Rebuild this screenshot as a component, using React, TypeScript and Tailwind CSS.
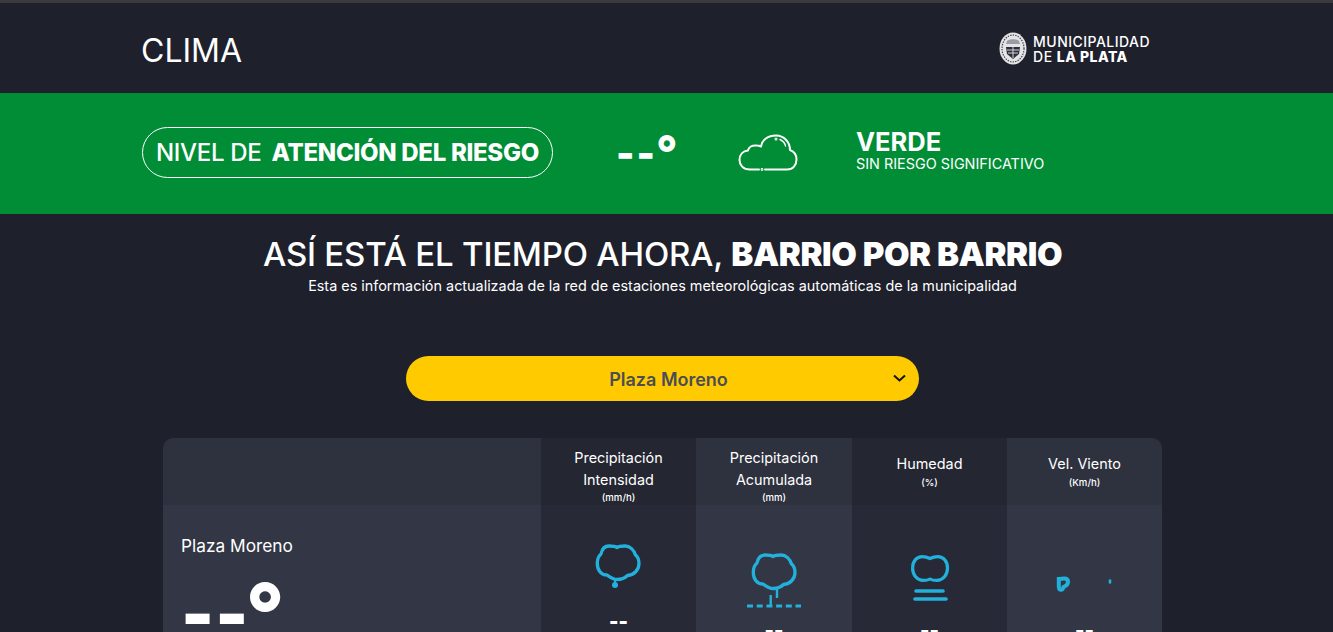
import React from "react";

const CLOUD = "M14 2 C17 2 20 2 22.3 3.5 C24 2 27 2 30 2 C35 2 39 6 40.5 11 C43 13 44 16 44 19.5 C44 26 39 31 32.5 31.5 C30 34 26 35.5 22 35.5 C18 35.5 15 33 12 31 C6 31 2.3 26 2.3 19.5 C2.3 16 3.5 12 6 10 C7 5 10 2 14 2 Z";

function Head({ title, sub, unit, bg }: { title: string; sub?: string; unit: string; bg: string }) {
  return (
    <div className={`${bg} flex flex-col items-center text-center text-white ${sub ? "pt-[9px]" : "pt-[15px]"}`}>
      <div className="text-[14.4px] leading-[22px]">{title}</div>
      {sub && <div className="text-[14.4px] leading-[22px]">{sub}</div>}
      <div className={`text-[9.6px] leading-[14px] font-medium ${sub ? "" : "mt-[1px]"}`}>{unit}</div>
    </div>
  );
}

function Cell({ bg, children, pad, gap }: { bg: string; children: React.ReactNode; pad: string; gap: string }) {
  return (
    <div className={`${bg} flex flex-col items-center ${pad}`}>
      {children}
      <div className={`shrink-0 text-white text-[20px] leading-[20px] font-black ${gap}`}>--</div>
    </div>
  );
}

export default function App() {
  return (
    <div className="h-[632px] w-[1333px] overflow-hidden bg-[#1e202c] font-['Inter',sans-serif]">
      <div className="h-[3px] bg-[#3a3a3a]" />
      <header className="h-[90px] w-[1325px] flex items-center justify-between pl-[141px] pr-[175px]">
        <h1 className="text-[32px] leading-none text-white font-normal mt-[6px]">CLIMA</h1>
        <div className="flex items-center gap-[6px] mt-[1px]">
          <svg width="28" height="33" viewBox="0 0 28 33">
            <ellipse cx="14" cy="16.5" rx="13.5" ry="16" fill="#e4e4e6" />
            <ellipse cx="14" cy="16.5" rx="11" ry="13.5" fill="none" stroke="#3c3f4b" strokeWidth="1.2" strokeDasharray="1.4 1.2" />
            <path d="M8 9 C10 6.5 18 6.5 20 9 L21 12 H7 Z" fill="#9a9ca4" />
            <path d="M7 15 H21 L20 22 L14 27 L8 22 Z" fill="#2c2f3b" />
            <path d="M8 18 H20 M9 21 H19 M14 15 V26" stroke="#e4e4e6" strokeWidth="0.9" />
          </svg>
          <div className="text-white text-[14px] leading-[14.5px] tracking-[0.47px] font-medium mt-[2px]">
            <div>MUNICIPALIDAD</div>
            <div>DE <b className="font-extrabold">LA PLATA</b></div>
          </div>
        </div>
      </header>

      <section className="h-[121px] w-full bg-[#018d36] flex items-center pl-[142px]">
        <div className="w-[411px] h-[51px] mt-[-2px] rounded-full border border-white flex items-center pl-[13px] text-white text-[24px] leading-none whitespace-nowrap">
          <span className="font-medium tracking-[-0.3px]">NIVEL DE</span>
          <b className="ml-[10px] font-extrabold tracking-[-0.3px]">ATENCIÓN DEL RIESGO</b>
        </div>
        <div className="ml-[63px] w-[59px] mt-[-22px] text-white text-[28px] leading-[28px] font-black whitespace-nowrap">
          <span className="inline-block translate-y-[11px] text-[39px] tracking-[2px]">--</span><span className="inline-block ml-[-1px] translate-y-[13px] text-[47px] font-extrabold">°</span>
        </div>
        <svg className="ml-[63px] mt-[-2px]" width="60" height="38" viewBox="0 0 60 38" fill="none" stroke="white" strokeWidth="2" strokeLinecap="round" strokeLinejoin="round">
          <path d="M21 35.5 H12 C5 35.5 1.5 31 1.5 26 C1.5 20.5 5 17 10 16.5 C10.5 13 14 11 19 11.5 C21 11.5 22 12 23 12.5 C24 6 30 1.5 38 1.5 C46 1.5 52 8 52 16 C56 17.5 58.5 21 58.5 25.5 C58.5 31 55 35.5 49 35.5 H27" />
          <path d="M42 5.5 C45 7 47 9 47.5 12" strokeWidth="1.4" />
          <circle cx="38" cy="5" r="0.5" fill="white" />
          <circle cx="24" cy="35.5" r="0.4" fill="white" />
        </svg>
        <div className="ml-[58px] text-white mt-[-8px]">
          <div className="text-[25.5px] leading-[27px] font-bold">VERDE</div>
          <div className="text-[14.4px] leading-[16px] mt-[1px]">SIN RIESGO SIGNIFICATIVO</div>
        </div>
      </section>

      <main className="w-[1325px] flex flex-col items-center">
        <h2 className="mt-[18px] text-[33px] leading-[44px] text-white font-medium whitespace-nowrap tracking-[-0.22px]">
          ASÍ ESTÁ EL TIEMPO AHORA, <b className="font-black tracking-[-0.4px]">BARRIO POR BARRIO</b>
        </h2>
        <p className="text-[14.4px] leading-[20px] text-white">
          Esta es información actualizada de la red de estaciones meteorológicas automáticas de la municipalidad
        </p>

        <div className="mt-[60px] w-[513px] h-[45px] rounded-full bg-[#ffcb00] flex items-center pl-[38px] pr-[13px] text-[#4a4d55] text-[18px] font-semibold">
          <span className="flex-1 text-center mt-[1px]">Plaza Moreno</span>
          <svg width="13" height="9" viewBox="0 0 13 9" fill="none" stroke="#111" strokeWidth="2">
            <path d="M1 1.5 L6.5 6.5 L12 1.5" />
          </svg>
        </div>

        <div className="mt-[37px] w-[999px] rounded-t-[10px] overflow-hidden grid grid-cols-[378px_155px_156px_155px_155px] grid-rows-[67px_127px]">
          <div className="bg-[#2e313e]" />
          <Head bg="bg-[#242632]" title="Precipitación" sub="Intensidad" unit="(mm/h)" />
          <Head bg="bg-[#2e313e]" title="Precipitación" sub="Acumulada" unit="(mm)" />
          <Head bg="bg-[#242632]" title="Humedad" unit="(%)" />
          <Head bg="bg-[#2e313e]" title="Vel. Viento" unit="(Km/h)" />

          <div className="bg-[#333644] pl-[18px] pt-[30px] text-white">
            <div className="text-[17.3px] leading-[22px]">Plaza Moreno</div>
            <div className="mt-[5px] text-[53px] leading-[60px] font-black whitespace-nowrap">
              <span className="inline-block translate-y-[17px] text-[70px] tracking-[1px]">--</span><span className="inline-block ml-[-4px] translate-y-[22px] text-[85px] font-extrabold">°</span>
            </div>
          </div>

          <Cell bg="bg-[#272a36]" pad="pt-[39px]" gap="mt-[21px]">
            <svg className="block shrink-0" width="47" height="46" viewBox="0 0 47 46" fill="none" stroke="#22b1dc">
              <path d={CLOUD} strokeWidth="3.3" strokeLinejoin="round" />
              <path d="M20 35 V41" strokeWidth="2" />
              <circle cx="20" cy="41" r="3" fill="#22b1dc" stroke="none" />
            </svg>
          </Cell>
          <Cell bg="bg-[#333644]" pad="pt-[48px]" gap="mt-[11px]">
            <svg className="block shrink-0" width="56" height="56" viewBox="0 0 56 56" fill="none" stroke="#22b1dc">
              <path transform="translate(5 0)" d={CLOUD} strokeWidth="3.3" strokeLinejoin="round" />
              <path d="M31 35 V45 M24.7 42 V54" strokeWidth="2.4" />
              <path d="M1 53 H55" strokeWidth="2.8" strokeDasharray="6 3.7" />
            </svg>
          </Cell>
          <Cell bg="bg-[#272a36]" pad="pt-[50px]" gap="mt-[17px]">
            <svg className="block shrink-0" width="42" height="48" viewBox="0 0 42 48" fill="none" stroke="#22b1dc" strokeLinecap="round">
              <path d="M13 1.6 C16 1.6 18 2 21 3.5 C24 2 26 1.6 29 1.6 C34 1.6 38.5 6 38.5 13 C38.5 20 34 25.4 28 25.4 C25 25.4 23 25.2 21 24 C19 25.2 17 25.4 14 25.4 C8 25.4 3.6 20 3.6 13 C3.6 6 8 1.6 13 1.6 Z" strokeWidth="3.2" />
              <path d="M7 36 H34" strokeWidth="3.6" />
              <path d="M6 44 H37" strokeWidth="3.6" />
            </svg>
          </Cell>
          <Cell bg="bg-[#333644]" pad="pt-[70px]" gap="mt-[23px]">
            <svg className="block shrink-0" width="60" height="22" viewBox="0 0 60 22" fill="none" stroke="#22b1dc" strokeLinecap="round">
              <path d="M4 4 C6 3.5 8 3.5 9.5 3.5 C12 3.5 13 5 13 7 C13 9.5 11 11 8.5 12 C8 14 7 15 5.5 14.8 C4 14.7 3.8 13 3.8 11 V4 Z" strokeWidth="4" />
              <path d="M55 5.5 V7.5" strokeWidth="2.6" />
            </svg>
          </Cell>
        </div>
      </main>
    </div>
  );
}
